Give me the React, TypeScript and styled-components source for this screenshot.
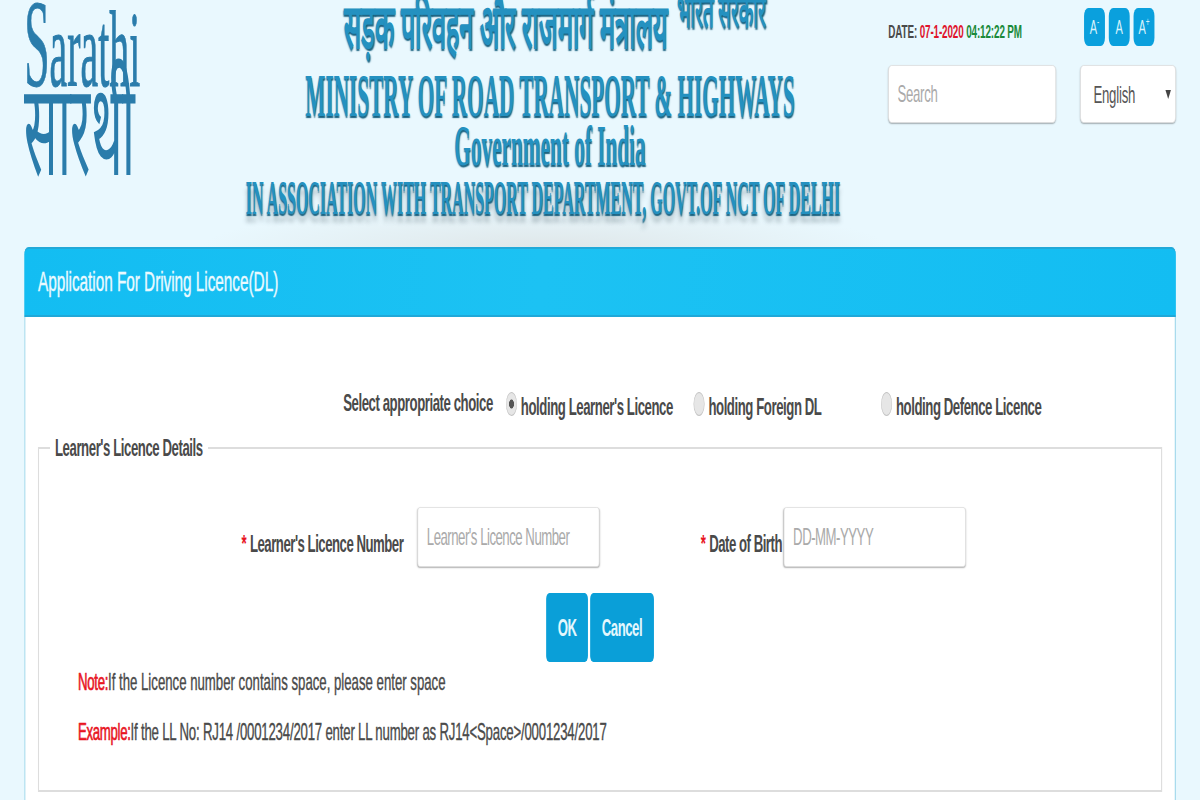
import styled, { createGlobalStyle } from 'styled-components';

const GlobalStyle = createGlobalStyle`
    html,
    body {
        margin: 0;
        height: 800px;
        overflow: hidden;
        background: #e9f8fe;
    }
    * {
        box-sizing: border-box;
    }
`;

// the whole page is squeezed sideways, all sizes below are before the squeeze
const Page = styled.div`
    width: 2182px;
    height: 800px;
    overflow: hidden;
    transform: scaleX(0.55);
    transform-origin: left top;
    font-family: 'Liberation Sans', Arial, sans-serif;
    color: #4a4a4a;
`;

const Header = styled.header`
    display: flex;
    height: 247px;
    padding: 0 44px;
`;

const LogoBox = styled.div`
    width: 323px;
    flex: none;
    font-family: 'Liberation Serif', serif;
    color: #2a7cab;
    line-height: 1;
`;

const LogoLatin = styled.div`
    height: 93px;
    margin-top: -17px;
    font-size: 108px;
    white-space: nowrap;
    transform: scaleX(0.67);
    transform-origin: left top;
    -webkit-text-stroke: 1px #2a7cab;

    span {
        font-size: 124px;
    }
`;

const LogoHindi = styled.div`
    height: 110px;
    margin-top: -10px;
    font-size: 130px;
    white-space: nowrap;
    transform: scaleX(0.69);
    transform-origin: left top;
`;

const TitleBox = styled.div`
    flex: 1;
    min-width: 0;
    display: flex;
    flex-direction: column;
    align-items: center;
    font-family: 'Liberation Serif', serif;
    font-weight: 700;
    color: #2491c0;
    text-shadow: 1px 2px 2px #17607f;
    white-space: nowrap;
    background: radial-gradient(ellipse 50% 17% at 50% 100%, #dfe7e9 0, rgba(223, 231, 233, 0) 100%);
`;

const TitleLine = styled.div<{ $size: number; $height: number; $squeeze: number; $shift: number; $glow?: boolean }>`
    height: ${(p) => p.$height}px;
    margin-left: ${(p) => p.$shift}px;
    line-height: ${(p) => p.$height}px;
    font-size: ${(p) => p.$size}px;
    transform: scaleX(${(p) => p.$squeeze});
    ${(p) => p.$glow && 'text-shadow: 1px 2px 2px #17607f, 0 8px 7px rgba(90, 110, 120, 0.45);'}
`;

const HindiLine = styled(TitleLine)`
    line-height: 54px;
`;

const HindiSmall = styled.span`
    position: relative;
    top: -21px;
    margin-left: 8px;
    font-size: 46px;
`;

const SideBox = styled.div`
    width: 523px;
    flex: none;
    display: grid;
    grid-template-columns: 349px 174px;
    grid-template-rows: 65px 58px;
`;

const DateText = styled.div`
    align-self: center;
    font-size: 18px;
    font-weight: 700;
    letter-spacing: -0.25px;
    white-space: nowrap;
`;

const DateValue = styled.span<{ $color: string }>`
    color: ${(p) => p.$color};
`;

const SizeButtons = styled.div`
    display: flex;
    gap: 7px;
    padding: 8px 0 0 7px;
`;

const SizeButton = styled.button`
    width: 38px;
    height: 38px;
    padding: 0;
    border: 0;
    border-radius: 8px;
    background: #0aa0dd;
    color: #d8f2fb;
    font-family: inherit;
    font-size: 20px;

    sup {
        font-size: 12px;
        line-height: 0;
    }
`;

const SearchInput = styled.input`
    width: 305px;
    height: 58px;
    padding: 0 16px;
    border: 1px solid #ddd;
    border-radius: 6px;
    background: #fff;
    box-shadow: 0 1px 2px rgba(0, 0, 0, 0.3);
    font-family: inherit;
    font-size: 24px;
    letter-spacing: -0.6px;

    &::placeholder {
        color: #aaa;
    }
`;

const LangBox = styled.div`
    position: relative;
    width: 174px;
    height: 58px;

    &::after {
        content: '';
        position: absolute;
        top: 25px;
        right: 9px;
        border-left: 5px solid transparent;
        border-right: 5px solid transparent;
        border-top: 9px solid #444;
    }
`;

const LangSelect = styled.select`
    appearance: none;
    width: 100%;
    height: 100%;
    padding: 0 16px 0 23px;
    border: 1px solid #ddd;
    border-radius: 6px;
    background: #fff;
    box-shadow: 0 1px 2px rgba(0, 0, 0, 0.3);
    color: #555;
    font-family: inherit;
    font-size: 24px;
    letter-spacing: -0.4px;
`;

const Panel = styled.section`
    margin: 0 44px;
    height: 600px;
    border: 2px solid #8fd0e6;
    border-top: 0;
    border-radius: 8px 8px 0 0;
    background: #fff;
`;

const PanelHeading = styled.h1`
    margin: 0 -2px;
    height: 70px;
    padding-left: 25px;
    border-top: 2px solid #22a9d8;
    border-bottom: 2px solid #20a8d8;
    border-radius: 8px 8px 0 0;
    background: linear-gradient(100deg, #13bdf2 0, #1cc2f3 45%, #13bdf2 100%);
    color: #eafaff;
    font-size: 28px;
    font-weight: 400;
    letter-spacing: -0.1px;
    line-height: 66px;
    -webkit-text-stroke: 0.4px #eafaff;
`;

const ChoiceRow = styled.div`
    display: flex;
    align-items: center;
    height: 58px;
    margin-top: 59px;
    padding-left: 578px;
    font-size: 24px;
    font-weight: 700;
    letter-spacing: -0.8px;
`;

const ChoiceLabel = styled.div`
    width: 296px;
    flex: none;
    padding-bottom: 4px;
`;

const RadioOption = styled.label`
    width: 341px;
    flex: none;
    display: flex;
    align-items: center;
    gap: 7px;
    padding-top: 4px;
    white-space: nowrap;
`;

const Radio = styled.input`
    appearance: none;
    width: 20px;
    height: 24px;
    margin: 0 0 6px;
    border: 1px solid #c4c4c4;
    border-radius: 50%;
    background: #e6e6e6;

    &:checked {
        background: radial-gradient(circle, #555 0 4px, #e6e6e6 5px);
    }
`;

const Details = styled.fieldset`
    margin: 0 23px;
    height: 358px;
    padding: 45px 0 0;
    border: 2px solid #ddd;
`;

const Legend = styled.legend`
    margin-left: 19px;
    padding: 0 10px;
    font-size: 24px;
    font-weight: 700;
    letter-spacing: -0.8px;
`;

const FieldRow = styled.div`
    display: flex;
    align-items: center;
    padding-left: 368px;
    font-size: 24px;
    font-weight: 700;
    letter-spacing: -0.9px;
    white-space: nowrap;
`;

const FieldLabel = styled.label<{ $width: number }>`
    width: ${(p) => p.$width}px;
    flex: none;
    padding-top: 14px;
`;

const Star = styled.span`
    color: #e8141f;
    margin-right: 7px;
`;

const FieldInput = styled.input<{ $gap: number }>`
    width: 331px;
    height: 60px;
    flex: none;
    margin-right: ${(p) => p.$gap}px;
    padding: 0 16px;
    border: 1px solid #ddd;
    border-radius: 5px;
    box-shadow: 0 1px 2px rgba(0, 0, 0, 0.3);
    font-family: inherit;
    font-size: 24px;
    letter-spacing: -0.9px;

    &::placeholder {
        color: #aaa;
    }
`;

const Buttons = styled.div`
    display: flex;
    gap: 4px;
    margin: 26px 0 -5px;
    padding-left: 922px;
`;

const ActionButton = styled.button`
    height: 69px;
    padding: 0 21px;
    border: 0;
    border-radius: 6px;
    background: #0a9fd8;
    color: #e4f7fd;
    font-family: inherit;
    font-size: 24px;
    font-weight: 700;
    letter-spacing: -0.9px;
`;

const Note = styled.p<{ $tight?: boolean }>`
    margin: 0;
    height: 50px;
    padding-left: 71px;
    font-size: 24px;
    line-height: 50px;
    white-space: nowrap;
    -webkit-text-stroke: 0.4px #4a4a4a;
    letter-spacing: ${(p) => (p.$tight ? '-0.35px' : '0')};
`;

const NoteKey = styled.span`
    color: #e8141f;
    -webkit-text-stroke: 0.7px #e8141f;
    letter-spacing: -0.6px;
`;

const App = () => {
    return (
        <>
            <GlobalStyle />
            <Page>
                <Header>
                    <LogoBox>
                        <LogoLatin>
                            <span>S</span>arathi
                        </LogoLatin>
                        <LogoHindi>सारथी</LogoHindi>
                    </LogoBox>
                    <TitleBox>
                        <HindiLine $size={62} $height={70} $squeeze={0.745} $shift={36}>
                            सड़क परिवहन और राजमार्ग मंत्रालय <HindiSmall>भारत सरकार</HindiSmall>
                        </HindiLine>
                        <TitleLine $size={62} $height={50} $squeeze={0.623} $shift={18}>
                            MINISTRY OF ROAD TRANSPORT &amp; HIGHWAYS
                        </TitleLine>
                        <TitleLine $size={56} $height={52} $squeeze={0.69} $shift={18}>
                            Government of India
                        </TitleLine>
                        <TitleLine $size={48} $height={52} $squeeze={0.605} $shift={-7} $glow>
                            IN ASSOCIATION WITH TRANSPORT DEPARTMENT, GOVT.OF NCT OF DELHI
                        </TitleLine>
                    </TitleBox>
                    <SideBox>
                        <DateText>
                            DATE: <DateValue $color="#e0142c">07-1-2020</DateValue>{' '}
                            <DateValue $color="#1a8a3a">04:12:22 PM</DateValue>
                        </DateText>
                        <SizeButtons>
                            <SizeButton>
                                A<sup>-</sup>
                            </SizeButton>
                            <SizeButton>A</SizeButton>
                            <SizeButton>
                                A<sup>+</sup>
                            </SizeButton>
                        </SizeButtons>
                        <SearchInput placeholder="Search" />
                        <LangBox>
                            <LangSelect defaultValue="English">
                                <option>English</option>
                            </LangSelect>
                        </LangBox>
                    </SideBox>
                </Header>
                <Panel>
                    <PanelHeading>Application For Driving Licence(DL)</PanelHeading>
                    <ChoiceRow>
                        <ChoiceLabel>Select appropriate choice</ChoiceLabel>
                        <RadioOption>
                            <Radio type="radio" name="choice" defaultChecked />
                            holding Learner's Licence
                        </RadioOption>
                        <RadioOption>
                            <Radio type="radio" name="choice" />
                            holding Foreign DL
                        </RadioOption>
                        <RadioOption>
                            <Radio type="radio" name="choice" />
                            holding Defence Licence
                        </RadioOption>
                    </ChoiceRow>
                    <Details>
                        <Legend>Learner's Licence Details</Legend>
                        <FieldRow>
                            <FieldLabel $width={320}>
                                <Star>*</Star>Learner's Licence Number
                            </FieldLabel>
                            <FieldInput $gap={184} placeholder="Learner's Licence Number" />
                            <FieldLabel $width={151}>
                                <Star>*</Star>Date of Birth
                            </FieldLabel>
                            <FieldInput $gap={0} placeholder="DD-MM-YYYY" />
                        </FieldRow>
                        <Buttons>
                            <ActionButton>OK</ActionButton>
                            <ActionButton>Cancel</ActionButton>
                        </Buttons>
                        <Note>
                            <NoteKey>Note:</NoteKey>If the Licence number contains space, please enter space
                        </Note>
                        <Note $tight>
                            <NoteKey>Example:</NoteKey>If the LL No: RJ14 /0001234/2017 enter LL number as RJ14&lt;Space&gt;/0001234/2017
                        </Note>
                    </Details>
                </Panel>
            </Page>
        </>
    );
};

export default App;
